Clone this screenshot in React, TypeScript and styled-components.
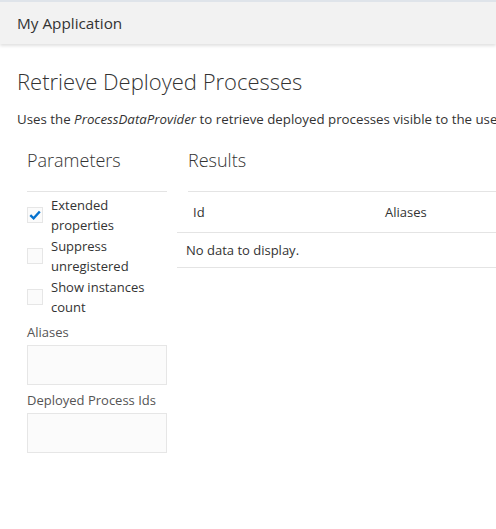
import React from 'react';
import styled, { createGlobalStyle } from 'styled-components';

const GlobalStyle = createGlobalStyle`
  html, body {
    margin: 0;
    padding: 0;
    background: #fff;
    overflow: hidden;
  }
  body {
    font-family: "Open Sans", "Noto Sans", sans-serif;
    color: #333;
  }
`;

const Page = styled.div`
  width: 496px;
  min-height: 529px;
  overflow: hidden;
`;

const TopBar = styled.header`
  height: 42px;
  border-top: 2px solid #dfe4ea;
  background: #f2f2f2;
  box-shadow: 0 2px 3px rgba(0, 0, 0, 0.12);
  display: flex;
  align-items: center;
  padding-left: 17px;
  font-size: 15.3px;
  color: #333;
`;

const Main = styled.main`
  padding: 21px 0 0 17px;
`;

const Title = styled.h1`
  margin: 0;
  font-size: 22px;
  font-weight: 300;
  line-height: 32px;
  color: #333;
  white-space: nowrap;
`;

const Description = styled.p`
  margin: 13px 0 0;
  font-size: 13.3px;
  line-height: 18px;
  white-space: nowrap;
  em {
    font-style: italic;
  }
`;

const Columns = styled.div`
  display: flex;
  align-items: flex-start;
  margin-top: 19px;
  padding-left: 10px;
`;

const Sidebar = styled.section`
  width: 140px;
  flex: none;
`;

const Results = styled.section`
  flex: 1;
  margin-left: 21px;
  min-width: 400px;
`;

const SectionTitle = styled.h2`
  margin: 0;
  font-size: 18px;
  font-weight: 300;
  line-height: 26px;
  padding-bottom: 18px;
  border-bottom: 1px solid #e4e4e4;
  color: #333;
`;

const CheckList = styled.div`
  padding-top: 2px;
`;

const CheckRow = styled.label`
  display: flex;
  align-items: center;
  gap: 8px;
  font-size: 13px;
  line-height: 20px;
  min-height: 41px;
`;

const Box = styled.span`
  width: 14px;
  height: 14px;
  flex: none;
  border: 1px solid #e6e6e6;
  background: #fbfbfb;
  display: flex;
  align-items: center;
  justify-content: center;
`;

const FieldLabel = styled.div`
  font-size: 13px;
  line-height: 18px;
  color: #555;
  margin-top: 6px;
`;

const TextBox = styled.div`
  height: 38px;
  margin-top: 4px;
  border: 1px solid #e6e6e6;
  background: #fbfbfb;
`;

const Table = styled.div`
  margin-left: -11px;
`;

const HeadRow = styled.div`
  display: grid;
  grid-template-columns: 192px 1fr;
  height: 40px;
  align-items: center;
  padding-left: 16px;
  font-size: 13px;
  border-bottom: 1px solid #e4e4e4;
`;

const EmptyRow = styled.div`
  height: 34px;
  display: flex;
  align-items: center;
  padding-left: 9px;
  font-size: 13px;
  border-bottom: 1px solid #e4e4e4;
`;

const Check = () => (
  <svg width="12" height="10" viewBox="0 0 12 10">
    <path d="M1.3 5.2 L4.6 8.3 L10.8 1.5" fill="none" stroke="#0572ce" strokeWidth="2.4" />
  </svg>
);

const options = [
  { text: 'Extended properties', checked: true },
  { text: 'Suppress unregistered', checked: false },
  { text: 'Show instances count', checked: false },
];

export default function App() {
  return (
    <Page>
      <GlobalStyle />
      <TopBar>My Application</TopBar>
      <Main>
        <Title>Retrieve Deployed Processes</Title>
        <Description>
          Uses the <em>ProcessDataProvider</em> to retrieve deployed processes visible to the user.
        </Description>
        <Columns>
          <Sidebar>
            <SectionTitle>Parameters</SectionTitle>
            <CheckList>
              {options.map((o) => (
                <CheckRow key={o.text}>
                  <Box>{o.checked && <Check />}</Box>
                  <span>{o.text}</span>
                </CheckRow>
              ))}
            </CheckList>
            <FieldLabel>Aliases</FieldLabel>
            <TextBox />
            <FieldLabel>Deployed Process Ids</FieldLabel>
            <TextBox />
          </Sidebar>
          <Results>
            <SectionTitle>Results</SectionTitle>
            <Table>
              <HeadRow>
                <span>Id</span>
                <span>Aliases</span>
              </HeadRow>
              <EmptyRow>No data to display.</EmptyRow>
            </Table>
          </Results>
        </Columns>
      </Main>
    </Page>
  );
}
